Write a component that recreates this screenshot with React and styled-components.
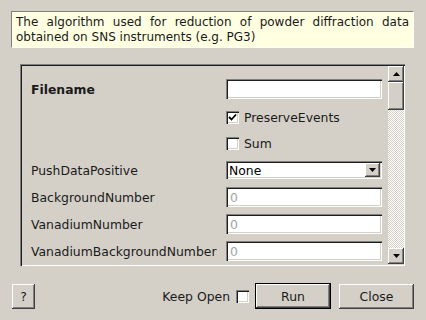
import React from 'react'
import styled, { createGlobalStyle, css } from 'styled-components'

const GlobalStyle = createGlobalStyle`
  html, body {
    margin: 0;
    padding: 0;
    background: #d4d0c8;
  }
  body {
    font-family: "DejaVu Sans", "Liberation Sans", sans-serif;
    font-size: 12.4px;
    color: #000;
  }
`

const raised = css`
  background: #d4d0c8;
  box-shadow: inset -1px -1px #404040, inset 1px 1px #ffffff, inset -2px -2px #808080;
`

const sunken = css`
  box-shadow: inset 1px 1px #808080, inset 2px 2px #1e1e1e, inset -1px -1px #ffffff, inset -2px -2px #d4d0c8;
`

const Dialog = styled.div`
  width: 426px;
  height: 320px;
  box-sizing: border-box;
  padding: 11px 12px 0 11px;
  display: flex;
  flex-direction: column;
`

const Description = styled.div`
  background: #ffffe1;
  border-top: 1px solid #808080;
  border-left: 1px solid #808080;
  border-bottom: 1px solid #ffffff;
  border-right: 1px solid #ffffff;
  height: 37px;
  box-sizing: border-box;
  padding: 3px 4px 0 4px;
  font-size: 12px;
  line-height: 15px;
  text-align: justify;
  color: #1a1a1a;
`

const Frame = styled.div`
  margin: 16px 9px 0 9px;
  height: 202px;
  box-sizing: border-box;
  display: flex;
  padding: 2px 1px 2px 2px;
  ${sunken};
`

const Form = styled.div`
  flex: 1;
  display: grid;
  grid-template-columns: 195px 156px;
  grid-auto-rows: 20px;
  row-gap: 7px;
  align-items: center;
  padding: 13px 0 0 9px;
  overflow: hidden;
`

const Label = styled.div`
  font-weight: ${p => (p.$bold ? 'bold' : 'normal')};
  color: #1a1a1a;
  white-space: nowrap;
`

const TextBox = styled.div`
  height: 20px;
  box-sizing: border-box;
  background: #fff;
  ${sunken};
  padding: 0 4px;
  display: flex;
  align-items: center;
  color: ${p => (p.$disabled ? '#a3a3a3' : '#000')};
`

const Select = styled(TextBox)`
  height: 18px;
  justify-content: space-between;
  padding: 0 2px 0 3px;
`

const ArrowButton = styled.div`
  width: 15px;
  height: 14px;
  ${raised};
  display: flex;
  align-items: center;
  justify-content: center;
`

const CheckRow = styled.label`
  display: flex;
  align-items: center;
  gap: 5px;
  color: #1a1a1a;
  padding-top: ${p => p.$offset || 0}px;
`

const Box = styled.span`
  width: 13px;
  height: 13px;
  box-sizing: border-box;
  background: #fff;
  ${sunken};
  display: inline-flex;
  align-items: center;
  justify-content: center;
`

const Scrollbar = styled.div`
  width: 16px;
  display: flex;
  flex-direction: column;
  background: repeating-conic-gradient(#ffffff 0 25%, #d4d0c8 0 50%) 0 0 / 2px 2px;
`

const ScrollButton = styled.div`
  height: 16px;
  ${raised};
  display: flex;
  align-items: center;
  justify-content: center;
`

const Thumb = styled.div`
  height: 28px;
  ${raised};
`

const Track = styled.div`
  flex: 1;
`

const Footer = styled.div`
  display: flex;
  align-items: center;
  margin-top: 17px;
  padding-left: 1px;
`

const Spacer = styled.div`
  flex: 1;
`

const Button = styled.button`
  font: inherit;
  color: #1a1a1a;
  height: 25px;
  width: ${p => p.$w}px;
  border: none;
  padding: 0;
  margin-left: ${p => p.$ml || 0}px;
  ${raised};
  ${p =>
    p.$default &&
    css`
      height: 26px;
      box-shadow: inset 0 0 0 1px #000, inset -2px -2px #404040, inset 2px 2px #ffffff, inset -3px -3px #808080;
    `}
`

const KeepOpen = styled.label`
  display: flex;
  align-items: center;
  gap: 6px;
  margin-right: 6px;
  color: #1a1a1a;
`

const Triangle = ({ up }) => (
  <svg width="7" height="4" viewBox="0 0 7 4">
    <path d={up ? 'M3.5 0 L7 4 L0 4 Z' : 'M0 0 L7 0 L3.5 4 Z'} fill="#000" />
  </svg>
)

const Check = () => (
  <svg width="9" height="9" viewBox="0 0 9 9">
    <path d="M1 4 L3.5 6.5 L8 1.5" stroke="#000" strokeWidth="1.8" fill="none" />
  </svg>
)

const Checkbox = ({ checked }) => <Box>{checked && <Check />}</Box>

export default function App() {
  return (
    <Dialog>
      <GlobalStyle />
      <Description>
        The algorithm used for reduction of powder diffraction data obtained on SNS instruments (e.g. PG3)
      </Description>
      <Frame>
        <Form>
          <Label $bold>Filename</Label>
          <TextBox />
          <span />
          <CheckRow $offset={2}>
            <Checkbox checked />
            PreserveEvents
          </CheckRow>
          <span />
          <CheckRow>
            <Checkbox />
            Sum
          </CheckRow>
          <Label>PushDataPositive</Label>
          <Select>
            None
            <ArrowButton>
              <Triangle />
            </ArrowButton>
          </Select>
          <Label>BackgroundNumber</Label>
          <TextBox $disabled>0</TextBox>
          <Label>VanadiumNumber</Label>
          <TextBox $disabled>0</TextBox>
          <Label>VanadiumBackgroundNumber</Label>
          <TextBox $disabled>0</TextBox>
        </Form>
        <Scrollbar>
          <ScrollButton>
            <Triangle up />
          </ScrollButton>
          <Thumb />
          <Track />
          <ScrollButton>
            <Triangle />
          </ScrollButton>
        </Scrollbar>
      </Frame>
      <Footer>
        <Button $w={23}>?</Button>
        <Spacer />
        <KeepOpen>
          Keep Open
          <Checkbox />
        </KeepOpen>
        <Button $w={76} $default>Run</Button>
        <Button $w={75} $ml={8}>Close</Button>
      </Footer>
    </Dialog>
  )
}
